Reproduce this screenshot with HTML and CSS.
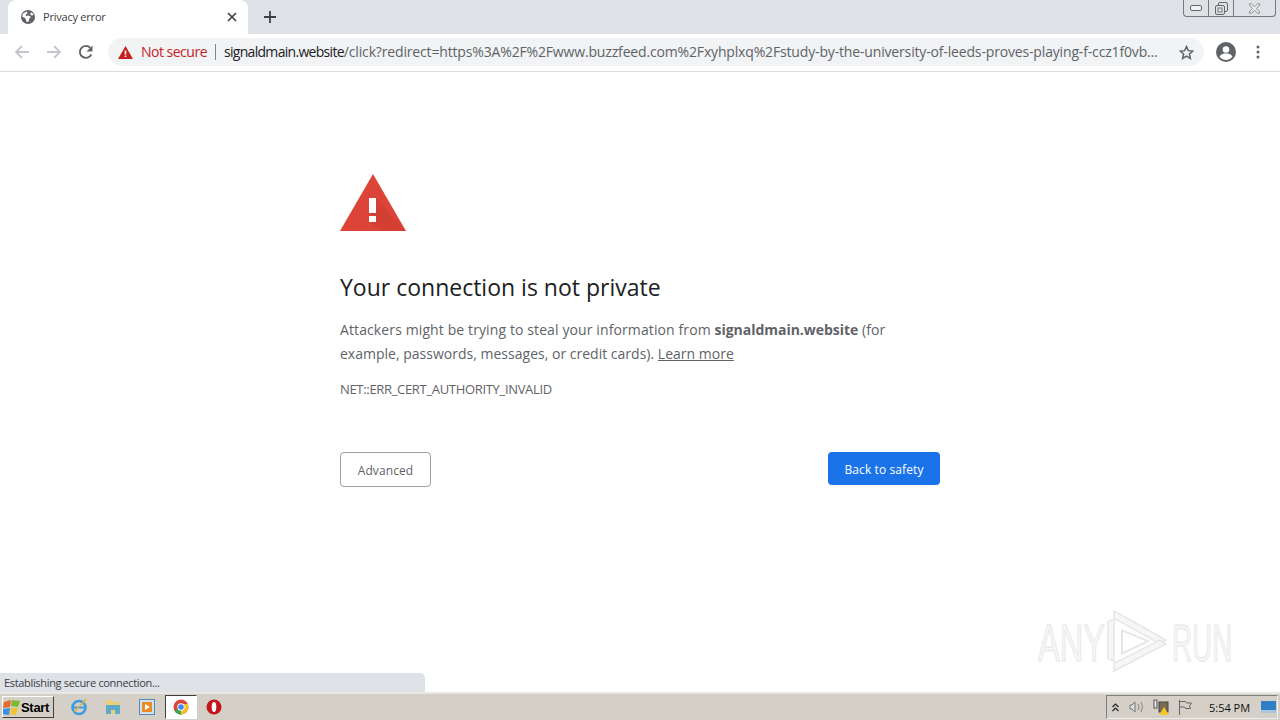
FILE: index.html
```html
<!DOCTYPE html>
<html lang="en">
<head>
<meta charset="utf-8">
<title>Privacy error</title>
<link rel="stylesheet" href="styles.css">
</head>
<body>
<div class="screen">
  <header class="tabstrip">
    <div class="tab">
      <svg class="favicon" width="16" height="16" viewBox="0 0 16 16"><circle cx="8" cy="8" r="7" fill="#5f6368"/><path d="M7 2.500 3 4.500l-.8 3 3.300 2 1.200 3.500 2-.5.300-2.500 2-2-2.500-1.500-2.500.5-.5-1.500 2-1zM11 3.500l-1 1.500 1.500 1.500 2-.5-.5-1.500z" fill="#fff"/></svg>
      <span class="tab-title">Privacy error</span>
      <svg class="tab-close" width="10" height="10" viewBox="0 0 10 10"><path d="M1 1l8 8M9 1l-8 8" stroke="#3c4043" stroke-width="1.700"/></svg>
    </div>
    <svg class="newtab" width="12" height="12" viewBox="0 0 12 12"><path d="M6 0v12M0 6h12" stroke="#3c4043" stroke-width="1.800"/></svg>
    <div class="winctl">
      <span class="winbtn min"><svg width="12" height="8" viewBox="0 0 12 8"><rect x="0.5" y="1.500" width="11" height="5" rx="1.500" fill="#eef0f2" stroke="#666"/></svg></span>
      <span class="winbtn max"><svg width="13" height="13" viewBox="0 0 13 13"><rect x="3.500" y="0.500" width="9" height="9" rx="1.500" fill="none" stroke="#666"/><rect x="0.500" y="3.500" width="9" height="9" rx="1.500" fill="#dee1e6" stroke="#666"/><rect x="3" y="6" width="4" height="4" fill="none" stroke="#777"/></svg></span>
      <span class="winbtn close"><svg width="13" height="11" viewBox="0 0 13 11"><path d="M1.500 .8h2l3 3 3-3h2v1.500l-3 3.200 3 3.200v1.500h-2l-3-3-3 3h-2v-1.500l3-3.200-3-3.200z" fill="#e9ebee" stroke="#777" stroke-width=".8"/></svg></span>
    </div>
  </header>

  <nav class="toolbar">
    <svg class="navicon" width="16" height="16" viewBox="0 0 16 16"><path d="M15 8H2M8 2 2 8l6 6" fill="none" stroke="#c3c6ca" stroke-width="1.800"/></svg>
    <svg class="navicon" width="16" height="16" viewBox="0 0 16 16"><path d="M1 8h13M8 2l6 6-6 6" fill="none" stroke="#c3c6ca" stroke-width="1.800"/></svg>
    <svg class="navicon" width="16" height="16" viewBox="0 0 16 16"><path d="M13.300 10.500A6 6 0 1 1 12.300 3.800" fill="none" stroke="#5f6368" stroke-width="1.900"/><path d="M14.500 1.500v6h-6z" fill="#5f6368"/></svg>
    <div class="omnibox">
      <svg class="warn-small" width="15" height="13" viewBox="0 0 15 13"><path d="M7.500 0 15 13H0z" fill="#c5221f"/><path d="M6.700 4.500h1.600v4H6.700zM6.700 9.500h1.600v1.500H6.700z" fill="#fff"/></svg>
      <span class="notsecure">Not secure</span>
      <span class="sep"></span>
      <span class="url"><span class="host">signaldmain.website</span>/click?redirect=https%3A%2F%2Fwww.buzzfeed.com%2Fxyhplxq%2Fstudy-by-the-university-of-leeds-proves-playing-f-ccz1f0vb...</span>
      <svg class="star" width="15" height="15" viewBox="0 0 24 24"><path d="M12 2.500l2.900 6.500 7.100.7-5.400 4.700 1.600 7-6.200-3.700-6.200 3.700 1.600-7L2 9.700 9.100 9z" fill="none" stroke="#5f6368" stroke-width="2.400"/></svg>
    </div>
    <svg class="avatar" width="20" height="20" viewBox="0 0 20 20"><circle cx="10" cy="10" r="10" fill="#5f6368"/><circle cx="10" cy="7.500" r="3.300" fill="#fff"/><path d="M3.500 14.500c1.500-2.500 4-3 6.500-3s5 .5 6.500 3A8 8 0 0 1 10 18a8 8 0 0 1-6.500-3.500z" fill="#fff"/></svg>
    <svg class="menu" width="4" height="14" viewBox="0 0 4 14"><circle cx="2" cy="2" r="1.500" fill="#5f6368"/><circle cx="2" cy="7" r="1.500" fill="#5f6368"/><circle cx="2" cy="12" r="1.500" fill="#5f6368"/></svg>
  </nav>

  <main class="page">
    <div class="interstitial">
      <svg class="warn-big" width="66" height="57" viewBox="0 0 66 57"><path d="M33 0 66 57H0z" fill="#db4437"/><path d="M36 24 66 57H42L29 48z" fill="#c8392e" opacity=".4"/><path d="M29 24h7v15h-7zM29 42h7v6h-7z" fill="#fff"/></svg>
      <h1 class="title">Your connection is not private</h1>
      <p class="desc"><span class="lead">Attackers might be trying to steal your information from </span><strong>signaldmain.website</strong> <span class="lead">(for</span> example, passwords, messages, or credit cards). <a class="learn">Learn more</a></p>
      <div class="code">NET::ERR_CERT_AUTHORITY_INVALID</div>
      <div class="actions">
        <button class="btn btn-adv">Advanced</button>
        <button class="btn btn-back">Back to safety</button>
      </div>
    </div>
    <div class="status">Establishing secure connection...</div>
    <div class="watermark">
      <span class="wm-text wm-any">ANY</span>
      <svg class="wm-logo" width="62" height="62" viewBox="0 0 62 64" preserveAspectRatio="none"><g fill="#f6f6f6" stroke="#e6e6e6" stroke-width="1.500"><path d="M3 12 9 9V53L3 50z"/><path d="M9 1 61 31 55 35 15 12 9 9z"/><path d="M9 63 61 35 55 31 15 52 9 55z"/></g><path d="M17 21 43 32 17 45z" fill="#fff" stroke="#e6e6e6" stroke-width="2"/></svg>
      <span class="wm-text wm-run">RUN</span>
    </div>
  </main>

  <footer class="taskbar">
    <button class="start">
      <svg width="18" height="17" viewBox="0 0 18 17"><path d="M1 3l7-2-1 7-7 1z" fill="#e8692c"/><path d="M9 1l8 1-2 6-7-1z" fill="#7db82f"/><path d="M0 10l7-1-1 7-7-1z" fill="#3a8fe0"/><path d="M8 9l7 0-2 7-6-1z" fill="#f2c230"/></svg>
      <span>Start</span>
    </button>
    <div class="quick">
      <span class="qi"><svg width="18" height="18" viewBox="0 0 18 18"><circle cx="9" cy="9.500" r="6.500" fill="none" stroke="#3d9be0" stroke-width="2.600"/><path d="M3 9.500h12" stroke="#3d9be0" stroke-width="2"/><path d="M4 14Q11 7 16 1" fill="none" stroke="#e2b33c" stroke-width="1.400"/></svg></span>
      <span class="qi"><svg width="16" height="16" viewBox="0 0 16 16"><path d="M1 1h6l1 2h7v12H1z" fill="#e9cf7c"/><path d="M1 6h14v9H10v-4H6v4H1z" fill="#5fa9c9"/></svg></span>
      <span class="qi"><svg width="16" height="16" viewBox="0 0 16 16"><rect x=".5" y=".5" width="15" height="15" fill="#cfe0ee" stroke="#5a88b0"/><rect x="3" y="3" width="10" height="10" fill="#e98a22"/><path d="M6 5l5 3-5 3z" fill="#fff"/></svg></span>
      <span class="qi active"><svg width="16" height="16" viewBox="0 0 16 16"><circle cx="8" cy="8" r="7.500" fill="#db4437"/><path d="M8 8 1.500 11.700A7.500 7.500 0 0 0 8 15.500z" fill="#3aa757"/><path d="M8 8v7.500A7.500 7.500 0 0 0 14.900 5H8z" fill="#f3c02f"/><circle cx="8" cy="8" r="3.700" fill="#fff"/><circle cx="8" cy="8" r="2.800" fill="#4285f4"/></svg></span>
      <span class="qi"><svg width="16" height="16" viewBox="0 0 16 16"><circle cx="8" cy="8" r="7.500" fill="#c4161c"/><ellipse cx="8" cy="8" rx="2.300" ry="5" fill="#fff"/></svg></span>
    </div>
    <div class="tray">
      <svg class="tr-up" width="7" height="9" viewBox="0 0 7 9"><path d="M.5 4 3.500 1l3 3M.5 8l3-3 3 3" fill="none" stroke="#222" stroke-width="1.200"/></svg>
      <svg class="tr-sound" width="16" height="14" viewBox="0 0 16 14"><path d="M1 5h2l3-3v10L3 9H1z" fill="#ddd" stroke="#777"/><path d="M9 4q2 3 0 6M12 2q3 5 0 10" fill="none" stroke="#888"/></svg>
      <svg class="tr-net" width="17" height="16" viewBox="0 0 17 16"><rect x="1" y="1" width="3" height="8" fill="#e8e8e8" stroke="#555"/><rect x="6" y="3" width="9" height="10" fill="#7a6a50" stroke="#444"/><path d="M11 8l5 8H6z" fill="#f3c82d"/></svg>
      <svg class="tr-flag" width="15" height="15" viewBox="0 0 15 15"><path d="M1.500 0v15M1.500 1.500h6l1 1.500h5l-2 3 1 2.500h-5l-1-1.500h-5" fill="none" stroke="#666"/></svg>
      <span class="clock">5:54 PM</span>
      <svg class="tr-desktop" width="15" height="12" viewBox="0 0 15 12"><rect width="15" height="12" fill="#2f7fc4"/><rect y="9" width="15" height="3" fill="#a9c6df"/></svg>
    </div>
  </footer>
</div>
</body>
</html>
```
FILE: styles.css
```css
* { box-sizing: border-box; }
html, body { margin: 0; padding: 0; }
body { width: 1280px; height: 720px; overflow: hidden; background: #fff; font-family: "Open Sans", "Noto Sans", sans-serif; }
.screen { width: 1280px; height: 720px; display: flex; flex-direction: column; }

.tabstrip { height: 34px; flex: none; background: #dee1e6; display: flex; align-items: flex-start; padding-left: 8px; }
.tab { width: 240px; height: 34px; background: #fff; border-radius: 8px 8px 0 0; display: flex; align-items: center; padding: 0 11px 0 12px; }
.favicon { flex: none; }
.tab-title { margin: -2px 0 0 7px; flex: 1; font-size: 11px; letter-spacing: -.22px; color: #3c4043; }
.tab-close { flex: none; }
.newtab { margin: 11px 0 0 16px; }
.winctl { margin-left: auto; margin-right: 4px; height: 17px; width: 93px; display: flex; border: 1px solid #777; border-top: 0; border-radius: 0 0 4px 4px; }
.winbtn { display: flex; align-items: center; justify-content: center; height: 16px; border-right: 1px solid #777; }
.min { width: 25px; }
.max { width: 25px; }
.close { flex: 1; border-right: 0; }

.toolbar { height: 38px; flex: none; background: #fff; border-bottom: 1px solid #dadce0; display: flex; align-items: center; padding: 0 14px 1px 14px; }
.navicon { margin-right: 16px; flex: none; }
.omnibox { width: 1096px; height: 28px; margin-left: -2px; background: #f1f3f4; border-radius: 14px; display: flex; align-items: center; padding: 0 10px; }
.warn-small { flex: none; }
.notsecure { margin: 0 0 2px 8px; font-size: 14px; letter-spacing: -.5px; color: #c5221f; }
.sep { width: 1px; height: 16px; background: #80868b; margin: 0 8px; }
.url { margin-bottom: 2px; font-size: 14px; letter-spacing: -.16px; color: #5f6368; white-space: nowrap; flex: 1; overflow: hidden; }
.host { color: #202124; letter-spacing: -.7px; }
.star { flex: none; margin-left: 8px; }
.avatar { flex: none; margin-left: 12px; }
.menu { flex: none; margin-left: 20px; }

.page { flex: 1; position: relative; }
.interstitial { width: 600px; margin-left: 340px; padding-top: 102px; }
.warn-big { display: block; }
.title { margin: 39px 0 0; font-size: 23px; line-height: 34px; font-weight: 400; color: #202124; }
.desc { margin: 14px 0 0; font-size: 14px; line-height: 24px; letter-spacing: .01px; color: #5f6368; }
.lead { letter-spacing: .11px; }
.desc strong { font-weight: 700; letter-spacing: -.03px; color: #5f6368; }
.learn { color: #5f6368; text-decoration: underline; }
.code { margin-top: 14px; font-size: 13px; line-height: 18px; letter-spacing: -.32px; color: #5f6368; }
.actions { margin-top: 54px; display: flex; justify-content: space-between; align-items: flex-start; }
.btn { font-family: inherit; font-size: 12px; letter-spacing: .1px; padding: 1px 0 0; border-radius: 4px; }
.btn-adv { width: 91px; height: 35px; background: #fff; border: 1px solid #9aa0a6; color: #5f6368; }
.btn-back { width: 112px; height: 33px; background: #1a73e8; border: 0; color: #fff; }

.status { position: absolute; left: 0; bottom: 0; width: 425px; height: 19px; background: #dee1e6; border-radius: 0 5px 0 0; font-size: 11px; letter-spacing: -.33px; line-height: 19px; padding-left: 4px; color: #3c4043; }
.watermark { position: absolute; right: 48px; bottom: 20px; height: 62px; display: flex; align-items: center; gap: 5px; }
.wm-text { display: block; font-family: "Liberation Sans", sans-serif; font-size: 51px; line-height: 1; color: #f6f6f6; -webkit-text-stroke: 1px #e6e6e6; transform-origin: left center; margin-top: 4px; }
.wm-any { width: 62px; transform: scaleX(.64); }
.wm-run { width: 60px; transform: scaleX(.545); }
.wm-logo { flex: none; }

.taskbar { height: 28px; flex: none; background: #d4d0c8; border-top: 2px solid #e9e7e2; display: flex; align-items: center; position: relative; }
.start { width: 52px; height: 22px; margin-left: 2px; padding: 0; background: #d4d0c8; border: 1px solid; border-color: #fff #404040 #404040 #fff; display: flex; align-items: center; gap: 0; font-family: "Liberation Sans", sans-serif; font-weight: 700; font-size: 13px; letter-spacing: -.3px; color: #000; }
.quick { display: flex; align-items: center; margin-left: 8px; }
.qi { width: 34px; height: 24px; display: flex; align-items: center; justify-content: center; }
.qi.active { width: 32px; background: #fff; border: 1px solid; border-color: #404040 #fff #fff #404040; margin-left: 1px; }
.tray { margin-left: auto; margin-right: 2px; width: 172px; height: 24px; border: 1px solid; border-color: #808080 #eee #eee #808080; display: flex; align-items: center; padding-left: 5px; }
.tray svg { flex: none; }
.tr-sound { margin-left: 10px; }
.tr-net { margin-left: 8px; }
.tr-flag { margin-left: 8px; }
.clock { font-size: 11px; margin-left: 16px; width: 40px; white-space: nowrap; color: #111; }
.tr-desktop { margin-left: 12px; }
```
